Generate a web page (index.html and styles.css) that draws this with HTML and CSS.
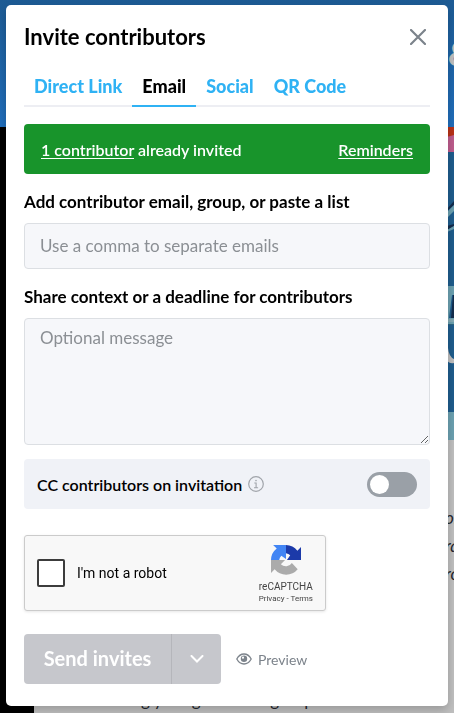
FILE: index.html
```html
<!DOCTYPE html>
<html lang="en">
  <head>
    <meta charset="utf-8">
    <meta name="viewport" content="width=device-width, initial-scale=1">
    <title>Invite contributors</title>
    <link rel="stylesheet" href="styles.css">
  </head>
  <body>
    <!-- dimmed page behind the dialog -->
    <div class="backdrop" aria-hidden="true">
      <div class="backdrop-header"><span>&amp;</span></div>
      <div class="backdrop-card">
        <svg class="backdrop-art" viewBox="0 0 20 313" width="20" height="313">
          <rect width="20" height="313" fill="#1e5c8c"/>
          <rect width="20" height="11" fill="#b83218"/>
          <path d="M0 12Q14 10 20 8V25H0z" fill="#bd5c8c"/>
          <path d="M13 82L20 74V78L13 84z" fill="#132c4c"/>
          <path d="M13 85L20 78V84L13 91z" fill="#6ba0b0"/>
          <path d="M13 99L20 97V99L13 103z" fill="#132c4c"/>
          <path d="M13 103L20 99V102L13 105z" fill="#6ba0b0"/>
          <rect y="159" width="20" height="39" fill="#6ba0b0"/>
          <path d="M15 191L18 168H20V191z" fill="#1e5c8c"/>
          <path d="M17 191L19 168H20V191z" fill="#132c4c"/>
          <rect y="192" width="20" height="3" fill="#83aab4"/>
          <rect y="197" width="20" height="1" fill="#2b6580"/>
          <path d="M14 221Q15 230 20 232V236Q15 237 13 233z" fill="#bfbfbf"/>
          <rect y="285" width="20" height="28" fill="#6ba0b0"/>
        </svg>
        <p class="backdrop-quote"><span>or<br>ra<br>ro</span></p>
        <p class="backdrop-text">sharing your gift with a group</p>
      </div>
    </div>

    <main class="modal" role="dialog" aria-labelledby="modal-title">
      <header class="modal-header">
        <h1 id="modal-title">Invite contributors</h1>
        <button type="button" class="close" aria-label="Close">
          <svg viewBox="0 0 16 16" width="16" height="16">
            <path d="M1 1L15 15M15 1L1 15" stroke="#7c838b" stroke-width="2.200" stroke-linecap="round"/>
          </svg>
        </button>
      </header>

      <nav class="tabs">
        <a href="#link">Direct Link</a>
        <a href="#email" class="active" aria-current="page">Email</a>
        <a href="#social">Social</a>
        <a href="#qr">QR Code</a>
      </nav>

      <form class="invite-form">
        <div class="notice">
          <span><a href="#contributors">1 contributor</a> already invited</span>
          <a href="#reminders">Reminders</a>
        </div>

        <label class="field-label" for="emails">Add contributor email, group, or paste a list</label>
        <input class="field" id="emails" type="text" placeholder="Use a comma to separate emails">

        <label class="field-label" for="message">Share context or a deadline for contributors</label>
        <textarea class="field message" id="message" placeholder="Optional message"></textarea>

        <div class="cc-row">
          <label for="cc">CC contributors on invitation</label>
          <svg viewBox="0 0 16 16" width="16" height="16" fill="none" stroke="#a0a4aa">
            <circle cx="8" cy="8" r="7.3" stroke-width="1.2"/>
            <path d="M6.3 7H8.1V11.6M6 11.8H10.1" stroke-width="1.1"/>
            <circle cx="8" cy="4.6" r=".8" fill="#a0a4aa" stroke="none"/>
          </svg>
          <input class="switch" id="cc" type="checkbox" role="switch">
        </div>

        <div class="captcha">
          <input class="captcha-box" id="robot" type="checkbox">
          <label for="robot">I'm not a robot</label>
          <div class="captcha-brand">
            <svg viewBox="0 0 64 64" width="30" height="30">
              <path d="M64 32V4.500L56.300 12.200A31.900 31.900 0 0 0 32 0V17.500A15 15 0 0 1 41 22L34 32z" fill="#1c3aa9"/>
              <path d="M32 0H4.500L12.200 7.700A31.900 31.900 0 0 0 0 32H17.500A15 15 0 0 1 22 23L32 30z" fill="#4285f4"/>
              <path d="M0 32V59.500L7.700 51.800A31.900 31.900 0 0 0 57 51.500L44.500 38.500A15 15 0 0 1 21 41L30 32z" fill="#ababab"/>
            </svg>
            <span class="captcha-name">reCAPTCHA</span>
            <span class="captcha-links"><a href="#privacy">Privacy</a> - <a href="#terms">Terms</a></span>
          </div>
        </div>

        <div class="actions">
          <div class="send-group">
            <button type="submit" class="send">Send invites</button>
            <button type="button" class="send-more" aria-label="More send options">
              <svg viewBox="0 0 14 8" width="14" height="8" fill="none">
                <path d="M1.500 1L7 6.500L12.500 1" stroke="#fff" stroke-width="2" stroke-linecap="round"/>
              </svg>
            </button>
          </div>
          <button type="button" class="preview">
            <svg viewBox="0 0 16 12" width="16" height="12">
              <path d="M.8 6Q3.500 1 8 1T15.200 6Q12.500 11 8 11T.8 6z" fill="none" stroke="#7c838b" stroke-width="1.300"/>
              <circle cx="8" cy="5.800" r="3.200" fill="#7c838b"/>
              <circle cx="7" cy="4.700" r="1.100" fill="#fff"/>
            </svg>
            Preview
          </button>
        </div>
      </form>
    </main>
  </body>
</html>
```

FILE: styles.css
```css
* {
  box-sizing: border-box;
}

body {
  margin: 0;
  padding: 5px 6px 7px;
  background-color: #000;
  color: #000;
  font-family: Lato, sans-serif;
}

h1,
p {
  margin: 0;
}

button,
input,
textarea {
  font-family: inherit;
}

button {
  padding: 0;
  border: none;
  background: none;
  cursor: pointer;
}

svg {
  display: block;
  flex: none;
}

/* page behind the dialog */
.backdrop {
  position: fixed;
  inset: 0;
  z-index: -1;
  overflow: hidden;
}

.backdrop-header {
  display: flex;
  justify-content: flex-end;
  height: 127px;
  padding-top: 34px;
  background: linear-gradient(#1d5b94, #206ebb);
  color: #bfbfbf;
  font-size: 32px;
  font-weight: 900;
  line-height: 40px;
}

.backdrop-header span {
  width: 6px;
}

.backdrop-card {
  height: 100%;
  margin-left: 34px;
  background-color: #bfbfbf;
  color: #24272e;
}

.backdrop-art {
  margin-left: auto;
}

.backdrop-quote {
  display: flex;
  justify-content: flex-end;
  margin-top: 64px;
  font-size: 17px;
  font-style: italic;
  line-height: 28px;
}

.backdrop-quote span {
  width: 9px;
}

.backdrop-text {
  margin-top: 100px;
  padding-left: 62px;
  font-size: 17px;
  line-height: 24px;
}

.modal {
  padding: 0 18px 22px;
  background-color: #fff;
  border-radius: 5px;
  box-shadow: 0 4px 10px rgba(0, 0, 0, 0.2);
}

.modal-header {
  display: flex;
  align-items: center;
  justify-content: space-between;
  height: 64px;
}

.modal-header h1 {
  padding-bottom: 2px;
  font-size: 22px;
  font-weight: 700;
}

.close {
  padding: 4px;
}

.tabs {
  display: flex;
  border-bottom: 2px solid #edeef3;
}

.tabs a {
  height: 38px;
  margin-bottom: -2px;
  padding: 0 10px;
  border-bottom: 2px solid transparent;
  color: #2fb2f4;
  font-size: 18px;
  font-weight: 900;
  line-height: 34px;
  text-decoration: none;
}

.tabs .active {
  border-color: #2fb2f4;
  color: #000;
}

.invite-form {
  display: flex;
  flex-direction: column;
  padding-top: 17px;
}

.notice {
  display: flex;
  align-items: center;
  justify-content: space-between;
  height: 50px;
  padding: 0 17px;
  background-color: #18942b;
  border-radius: 4px;
  color: #fff;
  font-size: 16px;
  font-weight: 600;
}

.notice a {
  color: inherit;
  text-underline-offset: 2px;
}

.field-label {
  padding: 18px 0 11px;
  font-size: 17px;
  font-weight: 700;
  line-height: 20px;
}

.field {
  width: 100%;
  height: 46px;
  padding: 0 15px 2px;
  background-color: #f6f7fa;
  border: 1px solid #dcdfe3;
  border-radius: 4px;
  font-size: 17px;
}

.field::placeholder {
  color: #8b8f94;
}

.message {
  height: 127px;
  padding: 9px 15px;
  line-height: 20px;
}

.cc-row {
  display: flex;
  align-items: center;
  gap: 6px;
  height: 50px;
  margin-top: 14px;
  padding: 0 13px;
  background-color: #f0f2f7;
  border-radius: 4px;
  font-size: 16px;
  font-weight: 600;
}

.switch {
  appearance: none;
  width: 50px;
  height: 25px;
  margin: 0 0 0 auto;
  padding: 3px;
  background-color: #9aa0a7;
  border-radius: 13px;
}

.switch::before {
  content: "";
  display: block;
  width: 19px;
  height: 19px;
  background-color: #fff;
  border-radius: 50%;
}

.switch:checked {
  background-color: #2fb2f4;
}

.switch:checked::before {
  margin-left: auto;
}

.captcha {
  display: flex;
  align-items: center;
  gap: 12px;
  width: 302px;
  max-width: 100%;
  height: 76px;
  margin-top: 26px;
  padding: 0 12px;
  background-color: #f8f8f8;
  border: 1px solid #cbcbcb;
  border-radius: 3px;
  box-shadow: 0 1px 3px rgba(0, 0, 0, 0.1);
  font-family: Roboto, sans-serif;
  font-size: 14px;
}

.captcha-box {
  appearance: none;
  width: 28px;
  height: 28px;
  margin: 0;
  background-color: #fff;
  border: 2px solid #3c3c3c;
  border-radius: 2px;
}

.captcha-brand {
  display: flex;
  flex-direction: column;
  align-items: center;
  margin-left: auto;
  padding-top: 4px;
  color: #444;
}

.captcha-name {
  margin-top: 6px;
  font-size: 10px;
  line-height: 12px;
}

.captcha-links {
  font-size: 8px;
  line-height: 12px;
}

.captcha-links a {
  color: inherit;
  text-decoration: none;
}

.actions {
  display: flex;
  align-items: center;
  gap: 15px;
  margin-top: 23px;
}

.send-group {
  display: flex;
  height: 50px;
  background-color: #c6c7cc;
  border-radius: 4px;
}

.send {
  width: 147px;
  padding-bottom: 3px;
  color: #fff;
  font-size: 20px;
  font-weight: 700;
}

.send-more {
  display: grid;
  place-items: center;
  width: 50px;
  border-left: 1px solid #b5b6bb;
}

.preview {
  display: flex;
  align-items: center;
  gap: 6px;
  color: #7c838b;
  font-size: 14px;
}
```
